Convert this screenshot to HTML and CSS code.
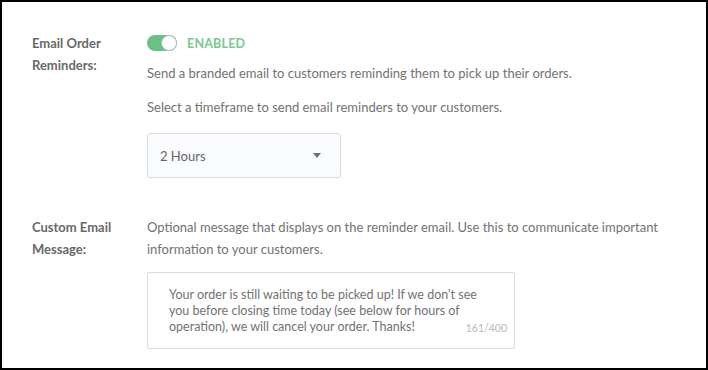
FILE: index.html
```html
<!DOCTYPE html>
<html>
<head>
<meta charset="utf-8">
<link rel="stylesheet" href="styles.css">
</head>
<body>
<div class="frame">
  <div class="row">
    <div class="label">Email Order<br>Reminders:</div>
    <div class="field">
      <div class="toggle-row">
        <span class="toggle"><span class="knob"></span></span>
        <span class="status">ENABLED</span>
      </div>
      <p class="desc first">Send a branded email to customers reminding them to pick up their orders.</p>
      <p class="desc">Select a timeframe to send email reminders to your customers.</p>
      <div class="select">
        <span>2 Hours</span>
        <span class="caret"></span>
      </div>
    </div>
  </div>
  <div class="row row2">
    <div class="label">Custom Email<br>Message:</div>
    <div class="field">
      <p class="desc top">Optional message that displays on the reminder email. Use this to communicate important information to your customers.</p>
      <div class="textarea">
        <div class="ta-text">Your order is still waiting to be picked up! If we don't see<br>you before closing time today (see below for hours of<br>operation), we will cancel your order. Thanks!</div>
        <span class="counter">161/400</span>
      </div>
    </div>
  </div>
</div>
</body>
</html>
```
FILE: styles.css
```css
* { box-sizing: border-box; }
html, body { margin: 0; padding: 0; background: #fff; }
body { font-family: Lato, "Open Sans", sans-serif; }
.frame {
  width: 708px;
  height: 370px;
  border: 2px solid #000;
  padding: 30px 0 0 30px;
  overflow: hidden;
}
.row {
  display: grid;
  grid-template-columns: 115px 1fr;
}
.row2 { margin-top: 38px; }
.label {
  font-size: 13px;
  font-weight: 700;
  line-height: 22px;
  color: #686868;
}
.toggle-row {
  display: flex;
  align-items: center;
  height: 22px;
  gap: 10px;
}
.toggle {
  width: 30px;
  height: 16px;
  border-radius: 8px;
  background: #6cbf87;
  position: relative;
  display: inline-block;
}
.knob {
  position: absolute;
  right: 0;
  top: 0;
  width: 16px;
  height: 16px;
  border-radius: 50%;
  background: #fdfeff;
  border: 1px solid #b7bcc2;
}
.status {
  font-size: 12.5px;
  font-weight: 700;
  color: #7cc693;
  letter-spacing: 0.2px;
}
.desc {
  margin: 12px 0 0;
  font-size: 13px;
  line-height: 22px;
  color: #727272;
}
.desc.first { margin-top: 8px; }
.desc.top { margin-top: 0; width: 540px; }
.select {
  margin-top: 15px;
  width: 194px;
  height: 45px;
  border: 1px solid #d7dbe1;
  border-radius: 3px;
  background: #fafbfd;
  display: flex;
  align-items: center;
  justify-content: space-between;
  padding: 0 19px 0 12px;
  font-size: 13px;
  color: #666;
}
.caret {
  width: 0;
  height: 0;
  border-left: 4px solid transparent;
  border-right: 4px solid transparent;
  border-top: 5px solid #6b7078;
}
.textarea {
  margin-top: 12px;
  width: 368px;
  height: 77px;
  border: 1px solid #d9dbe0;
  border-radius: 2px;
  background: #fff;
  position: relative;
  padding: 14px 10px 0 21px;
}
.ta-text {
  font-size: 12.5px;
  line-height: 16px;
  color: #727272;
  white-space: nowrap;
}
.counter {
  position: absolute;
  right: 7px;
  bottom: 14px;
  font-size: 10.5px;
  color: #b8b8b8;
}
```
